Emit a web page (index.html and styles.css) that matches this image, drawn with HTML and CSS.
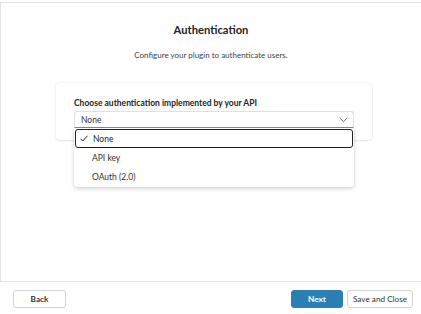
FILE: index.html
```html
<!DOCTYPE html>
<html>
<head>
<meta charset="utf-8">
<link rel="stylesheet" href="styles.css">
</head>
<body>
<div class="page">
  <div class="main">
    <h1 class="title">Authentication</h1>
    <p class="subtitle">Configure your plugin to authenticate users.</p>
    <div class="card">
      <div class="label">Choose authentication implemented by your API</div>
      <div class="select-wrap">
        <div class="select">
          <span>None</span>
          <svg class="chev" width="9" height="6" viewBox="0 0 9 6"><path d="M0.8 1 L4.5 4.6 L8.2 1" fill="none" stroke="#777" stroke-width="1"/></svg>
        </div>
        <div class="menu">
          <div class="opt focused">
            <svg class="check" width="8" height="7" viewBox="0 0 8 7"><path d="M0.6 3.8 L2.8 6 L7.4 0.8" fill="none" stroke="#222" stroke-width="1"/></svg>
            <span>None</span>
          </div>
          <div class="opt"><span>API key</span></div>
          <div class="opt"><span>OAuth (2.0)</span></div>
        </div>
      </div>
    </div>
  </div>
  <div class="footer">
    <button class="btn">Back</button>
    <div class="spacer"></div>
    <button class="btn primary">Next</button>
    <button class="btn wide">Save and Close</button>
  </div>
</div>
</body>
</html>
```
FILE: styles.css
```css
* { box-sizing: border-box; }
html, body { margin: 0; padding: 0; background: #fff; }
body { font-family: "Lato", "Open Sans", sans-serif; color: #242424; }
.page { width: 421px; height: 314px; display: flex; flex-direction: column; }
.main {
  margin-top: 2px;
  flex: 1;
  border-top: 1px solid #e3e3e3;
  border-left: 1px solid #e3e3e3;
  display: flex;
  flex-direction: column;
  align-items: flex-start;
}
.title {
  align-self: stretch;
  text-align: center;
  font-size: 11.2px;
  font-weight: 700;
  margin: 19px 0 0 0;
  line-height: 16px;
  color: #242424;
}
.subtitle {
  align-self: stretch;
  text-align: center;
  font-size: 8px;
  margin: 11px 0 0 0;
  line-height: 12px;
  color: #424242;
}
.card {
  margin: 22px 0 0 55px;
  width: 316px;
  height: 57px;
  border-radius: 4px;
  box-shadow: 0 0 2px rgba(0,0,0,0.12), 0 1px 2px rgba(0,0,0,0.08);
  padding: 14px 18px 0 18px;
}
.label {
  font-size: 8.5px;
  font-weight: 700;
  line-height: 12px;
  color: #242424;
}
.select-wrap { position: relative; margin-top: 2px; }
.select {
  height: 17px;
  border: 1px solid #e0e0e0;
  border-bottom: 1px solid #5b9bc9;
  border-radius: 3px 3px 0 0;
  display: flex;
  align-items: center;
  justify-content: space-between;
  padding: 0 5px 0 6px;
  font-size: 8.5px;
  color: #333;
}
.chev { display: block; }
.menu {
  position: absolute;
  left: 0;
  right: 0;
  top: 17px;
  height: 59px;
  background: #fff;
  border-radius: 3px;
  box-shadow: 0 0 2px rgba(0,0,0,0.14), 0 2px 4px rgba(0,0,0,0.14);
  padding: 1px 1px;
  display: flex;
  flex-direction: column;
}
.opt {
  height: 20px;
  display: flex;
  align-items: center;
  padding-left: 17px;
  font-size: 8.5px;
  color: #333;
}
.opt.focused {
  border: 1.5px solid #222;
  border-radius: 3px;
  padding-left: 4px;
  color: #242424;
}
.check { display: block; margin-right: 5px; }
.footer {
  height: 33px;
  border-top: 1px solid #e3e3e3;
  display: flex;
  align-items: flex-start;
  padding: 8px 8px 0 13px;
}
.spacer { flex: 1; }
.btn {
  font-family: "Lato", "Open Sans", sans-serif;
  height: 18px;
  width: 53px;
  font-size: 8.2px;
  font-weight: 700;
  background: #fff;
  color: #333;
  border: 1px solid #d4d4d4;
  border-radius: 3px;
  padding: 0;
  margin: 0;
}
.btn.primary {
  background: #2b7fb4;
  border-color: #2b7fb4;
  color: #fff;
  width: 52px;
}
.btn.wide { width: 66px; margin-left: 4px; font-weight: 400; }
```
